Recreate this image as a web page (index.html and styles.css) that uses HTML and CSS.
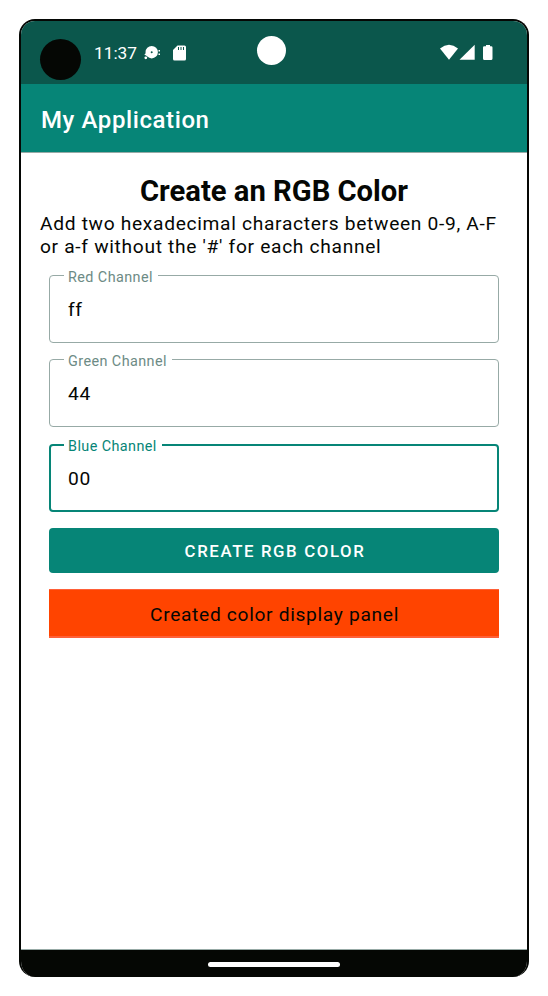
FILE: index.html
```html
<!DOCTYPE html>
<html lang="en">
<head>
<meta charset="utf-8">
<title>My Application</title>
<link rel="stylesheet" href="styles.css">
</head>
<body>
<div class="phone">
  <header class="status">
    <span class="dot"></span>
    <span class="time">11:37</span>
    <svg class="disc" width="18" height="16" viewBox="0 0 18 16" fill="#fff"><path fill-rule="evenodd" d="M7.700 1a6.200 6.200 0 1 1 0 12.400 6.200 6.200 0 0 1 0-12.400zM7.700 6.200a1 1 0 1 0 0 2 1 1 0 0 0 0-2z"/><circle cx="1.800" cy="12.800" r="1.400"/><path d="M.3 9.700L2 8l1.500 3zM14.500 5H16v1.500h-1.500zM14.500 8.500H16V10h-1.500z"/></svg>
    <svg class="card" width="13" height="16" viewBox="0 0 13 16"><path fill="#fff" d="M4.500.5h7Q13 .5 13 2v12q0 1.500-1.500 1.500h-10Q0 15.500 0 14V5z"/><path stroke="#0b574c" stroke-width="1" d="M5.500 2v3M8 2v3M10.500 2v3"/></svg>
    <svg class="signals" width="54" height="17" viewBox="0 0 54 17" fill="#fff"><path d="M0 4.500Q9 -2.800 18 4.500L9 15.700z"/><path d="M34.700.7v15H19.500z"/><path d="M46 1h4v1.200h1.200q1.300 0 1.300 1.300v11q0 1.500-1.500 1.500h-6.500q-1.500 0-1.500-1.500v-11q0-1.300 1.300-1.300H46z"/></svg>
    <span class="camera"></span>
  </header>
  <div class="appbar">My Application</div>
  <main class="content">
    <h1>Create an RGB Color</h1>
    <p class="hint">Add two hexadecimal characters between 0-9, A-F<br>or a-f without the '#' for each channel</p>
    <div class="form">
      <div class="field"><span class="label">Red Channel</span><span class="value">ff</span></div>
      <div class="field"><span class="label">Green Channel</span><span class="value">44</span></div>
      <div class="field focused"><span class="label">Blue Channel</span><span class="value">00</span></div>
      <button class="create">CREATE RGB COLOR</button>
      <div class="panel">Created color display panel</div>
    </div>
  </main>
  <footer class="nav"><span class="handle"></span></footer>
</div>
</body>
</html>
```
FILE: styles.css
```css
* { box-sizing: border-box; }
body {
  margin: 0;
  padding: 19px;
  background: #fff;
  font-family: Roboto, "Liberation Sans", sans-serif;
  color: #050704;
}
.phone {
  width: 510px;
  height: 958px;
  border: 2px solid #050704;
  border-bottom: 0;
  border-radius: 16px;
  overflow: hidden;
  display: flex;
  flex-direction: column;
}
.status {
  position: relative;
  flex: none;
  height: 63px;
  background: #0b574c;
  display: flex;
  align-items: center;
  padding: 0 33px 0 19px;
  color: #fff;
}
.dot {
  width: 41px;
  height: 41px;
  margin-top: 14px;
  border-radius: 50%;
  background: #050704;
}
.time { font-size: 17.3px; line-height: 20px; margin: 0 0 0 13px; }
.disc { margin: 0 0 0 7px; }
.card { margin: 0 0 0 11px; }
.signals { margin: 0 0 0 auto; }
.camera {
  position: absolute;
  left: 236px;
  top: 15px;
  width: 29px;
  height: 29px;
  border-radius: 50%;
  background: #fff;
}
.appbar {
  flex: none;
  height: 69px;
  background: #068577;
  border-bottom: 1px solid #97aaa6;
  color: #fff;
  font-size: 24px;
  font-weight: 500;
  line-height: 72px;
  padding-left: 20px;
  letter-spacing: 0.6px;
}
.content { flex: 1; padding: 21px 19px 0; }
h1 {
  margin: 0;
  font-size: 29.2px;
  line-height: 34px;
  font-weight: 700;
  text-align: center;
}
.hint {
  margin: 5px 0 0;
  font-size: 19.2px;
  line-height: 22.5px;
  letter-spacing: 0.68px;
  white-space: nowrap;
}
.form { margin: 17px 9px 0; display: flex; flex-direction: column; }
.field {
  position: relative;
  height: 68px;
  margin-bottom: 16.4px;
  border: 1px solid #97aaa6;
  border-radius: 4px;
  padding: 0 18px;
  display: flex;
  align-items: center;
}
.label {
  position: absolute;
  left: 14px;
  top: -7px;
  padding: 0 5px 0 4px;
  background: #fff;
  color: #6d8b85;
  font-size: 14.4px;
  line-height: 18px;
  letter-spacing: 0.42px;
}
.value { font-size: 19.2px; letter-spacing: 0.7px; margin-top: 1px; }
.focused { border: 2px solid #068577; padding: 0 17px; }
.focused .label { left: 13px; top: -8px; color: #068577; }
.create {
  height: 45px;
  border: 0;
  border-radius: 4px;
  background: #068577;
  color: #fff;
  font: 500 16.8px/46px Roboto, sans-serif;
  letter-spacing: 1.62px;
  padding: 0 0 0 2px;
}
.panel {
  margin-top: 16px;
  height: 49px;
  background: #ff4400;
  border-top: 1px solid #ff6038;
  border-bottom: 2px solid #ff6038;
  font-size: 19.2px;
  line-height: 49px;
  letter-spacing: 0.67px;
  text-align: center;
  padding-left: 1px;
}
.nav {
  flex: none;
  height: 28px;
  background: #050704;
  border-top: 1px solid #97aaa6;
  display: flex;
  justify-content: center;
  align-items: center;
}
.handle { width: 132px; height: 5px; border-radius: 3px; background: #fff; margin-top: 2px; }
```
